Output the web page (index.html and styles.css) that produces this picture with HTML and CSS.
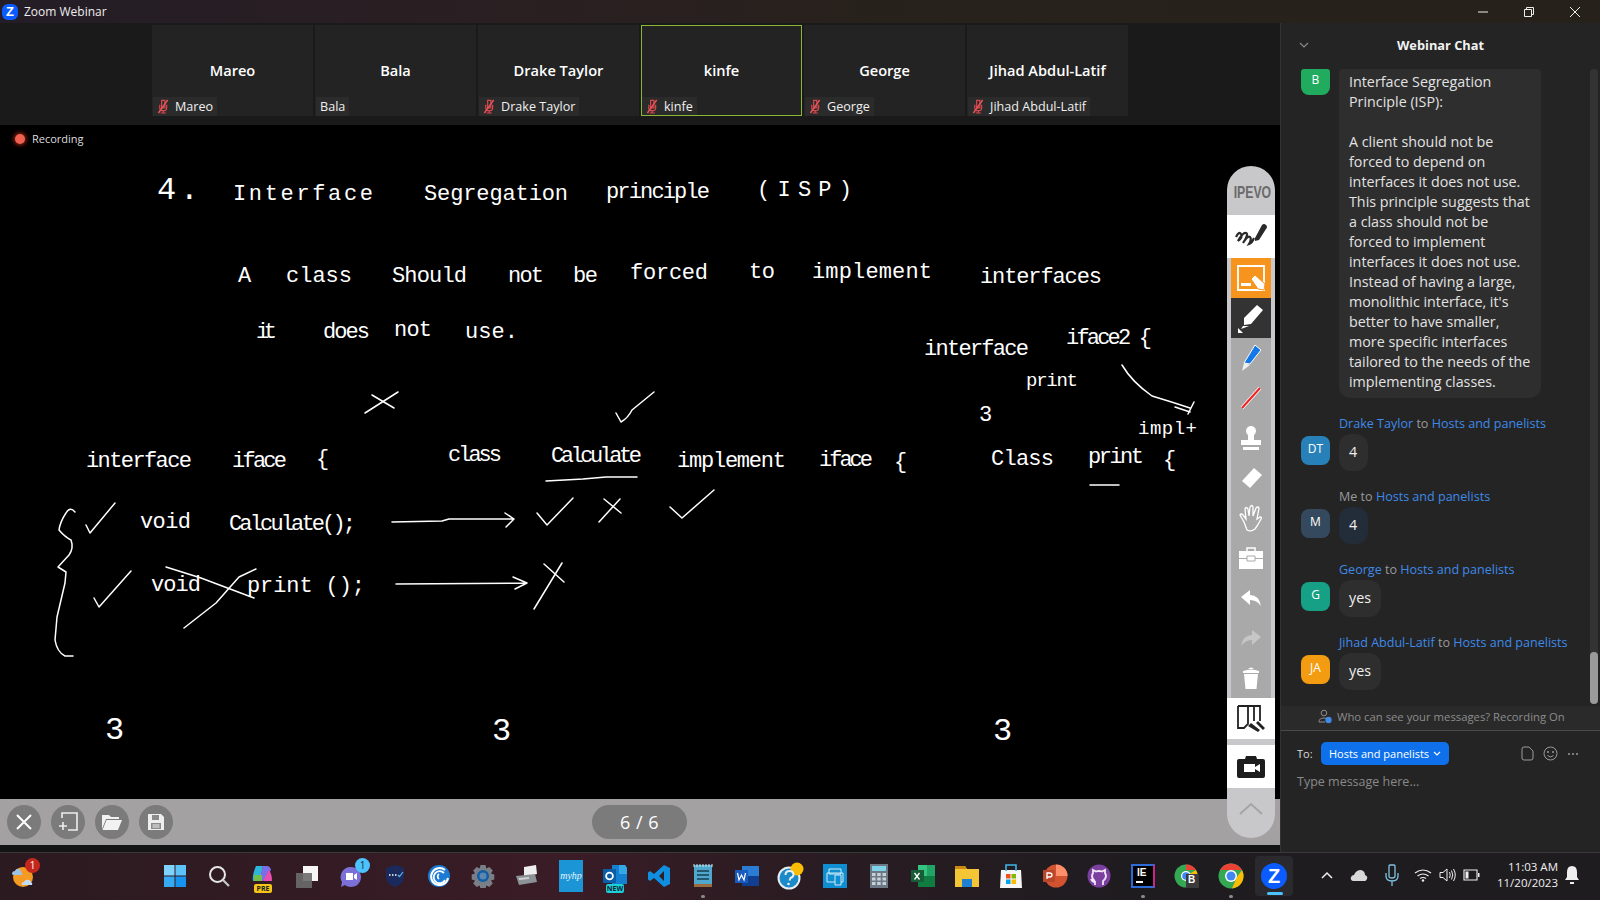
FILE: index.html
```html
<!DOCTYPE html>
<html lang="en">
<head>
    <meta charset="UTF-8">
    <title>Zoom Webinar</title>
    <link rel="stylesheet" href="styles.css">
</head>
<body>
    <svg class="sprite" width="0" height="0">
        <symbol id="mic-off" viewBox="0 0 14 16">
            <path d="M5 1.5h3.5v8h-3.5z M3 6v3.5c0 2 1.5 3 3.700 3s3.700-1 3.700-3V6 M6.700 12.500v2.500 M4 15h5.500" fill="none" stroke="#d9484c" stroke-width="1.300"/>
            <path d="M1.500 15L11.500 1" stroke="#e8555a" stroke-width="1.500"/>
        </symbol>
    </svg>

    <div class="titlebar">
        <div class="zoom-logo small">Z</div>
        <div class="title-text">Zoom Webinar</div>
        <div class="win-btns">
            <svg width="12" height="12" viewBox="0 0 12 12"><path d="M1 6h10" stroke="#eee" fill="none"/></svg>
            <svg width="12" height="12" viewBox="0 0 12 12"><path d="M1.500 3.500h7v7h-7z M3.500 3.500v-2h7v7h-2" stroke="#eee" fill="none"/></svg>
            <svg width="12" height="12" viewBox="0 0 12 12"><path d="M1 1l10 10M11 1L1 11" stroke="#eee" fill="none"/></svg>
        </div>
    </div>

    <div class="main">
        <div class="stage">
            <div class="strip">
                <div class="tile">
                    <div class="tile-name">Mareo</div>
                    <div class="tile-label"><svg class="mic"><use href="#mic-off"/></svg>Mareo</div>
                </div>
                <div class="tile">
                    <div class="tile-name">Bala</div>
                    <div class="tile-label">Bala</div>
                </div>
                <div class="tile">
                    <div class="tile-name">Drake Taylor</div>
                    <div class="tile-label"><svg class="mic"><use href="#mic-off"/></svg>Drake Taylor</div>
                </div>
                <div class="tile tile-active">
                    <div class="tile-name">kinfe</div>
                    <div class="tile-label"><svg class="mic"><use href="#mic-off"/></svg>kinfe</div>
                </div>
                <div class="tile">
                    <div class="tile-name">George</div>
                    <div class="tile-label"><svg class="mic"><use href="#mic-off"/></svg>George</div>
                </div>
                <div class="tile">
                    <div class="tile-name">Jihad Abdul-Latif</div>
                    <div class="tile-label"><svg class="mic"><use href="#mic-off"/></svg>Jihad Abdul-Latif</div>
                </div>
            </div>

            <div class="board">
                <div class="recording"><span class="rec-dot"></span>Recording</div>
                <svg class="ink-layer" viewBox="0 125 1280 674" width="1280" height="674">
                    <g class="ink">
                        <text class="ink-big" x="157" y="199" textLength="42">4 .</text>
                        <text x="233" y="200" textLength="140">Interface</text>
                        <text x="424" y="200" textLength="144">Segregation</text>
                        <text x="606" y="198" textLength="104">principle</text>
                        <text x="757" y="196" textLength="95">(ISP)</text>

                        <text x="238" y="282" textLength="16">A</text>
                        <text x="286" y="282" textLength="66">class</text>
                        <text x="392" y="282" textLength="75">Should</text>
                        <text x="508" y="282" textLength="36">not</text>
                        <text x="573" y="282" textLength="25">be</text>
                        <text x="630" y="279" textLength="78">forced</text>
                        <text x="749" y="278" textLength="26">to</text>
                        <text x="812" y="278" textLength="120">implement</text>
                        <text x="980" y="283" textLength="122">interfaces</text>

                        <text x="256" y="338" textLength="21">it</text>
                        <text x="323" y="338" textLength="47">does</text>
                        <text x="394" y="336" textLength="38">not</text>
                        <text x="465" y="338" textLength="53">use.</text>

                        <text x="924" y="355" textLength="105">interface</text>
                        <text x="1066" y="344" textLength="86">iface2 {</text>
                        <text class="ink-small" x="1026" y="386" textLength="52">print</text>
                        <text x="979" y="421" textLength="11">3</text>
                        <text class="ink-small" x="1138" y="434" textLength="59">impl+</text>

                        <text x="86" y="467" textLength="106">interface</text>
                        <text x="232" y="467" textLength="55">iface</text>
                        <text x="316" y="465" textLength="11">{</text>
                        <text x="448" y="461" textLength="54">class</text>
                        <text x="551" y="462" textLength="91">Calculate</text>
                        <text x="677" y="467" textLength="109">implement</text>
                        <text x="819" y="466" textLength="54">iface</text>
                        <text x="894" y="468" textLength="11">{</text>
                        <text x="991" y="465" textLength="63">Class</text>
                        <text x="1088" y="463" textLength="56">print</text>
                        <text x="1163" y="466" textLength="10">{</text>

                        <text x="140" y="528" textLength="51">void</text>
                        <text x="229" y="530" textLength="127">Calculate();</text>
                        <text x="151" y="591" textLength="50">void</text>
                        <text x="247" y="592" textLength="118">print ();</text>

                        <text class="ink-big" x="105" y="739" textLength="12">3</text>
                        <text class="ink-big" x="492" y="740" textLength="17">3</text>
                        <text class="ink-big" x="993" y="740" textLength="17">3</text>
                    </g>
                    <g class="marks">
                        <!-- curved arrow to impl -->
                        <path d="M1122 365Q1132 382 1152 396Q1172 402 1190 408M1175 407L1190 412M1194 402L1188 414"/>
                        <!-- crosses and ticks over the code -->
                        <path d="M365 413L398 392M372 395L394 408"/>
                        <path d="M616 413L621 422Q628 418 632 410L654 392"/>
                        <path d="M546 481L583 479L606 477L637 477"/>
                        <path d="M1090 485H1119"/>
                        <path d="M75 512Q70 506 66 513Q60 522 59 530Q65 537 71 540Q74 548 69 555L58 567L66 572L65 583L57 617L55 640Q57 652 65 656H73"/>
                        <path d="M86 525L90 533L115 503"/>
                        <path d="M94 598L99 607L131 571"/>
                        <path d="M537 513L547 525L573 498"/>
                        <path d="M604 499L621 513M620 499L599 522"/>
                        <path d="M670 507L682 518L714 490"/>
                        <path d="M166 567L201 578L254 598"/>
                        <path d="M184 628L216 603L239 577L256 569"/>
                        <path d="M544 564L564 582M562 563L534 609"/>
                        <path d="M392 522L442 521L449 519L514 519M505 513L514 519L506 527"/>
                        <path d="M396 584L527 583M513 577L527 583L515 589"/>
                    </g>
                </svg>
            </div>

            <div class="board-bar">
                <div class="round-btn">
                    <svg width="20" height="20" viewBox="0 0 20 20"><path d="M3 3l14 14M17 3L3 17" stroke="#fff" stroke-width="2" fill="none"/></svg>
                </div>
                <div class="round-btn">
                    <svg width="22" height="22" viewBox="0 0 22 22"><path d="M5 7V2h15v17h-9" stroke="#eee" stroke-width="1.600" fill="none"/><path d="M6 11v8M2 15h8" stroke="#eee" stroke-width="1.600"/></svg>
                </div>
                <div class="round-btn">
                    <svg width="22" height="20" viewBox="0 0 22 20"><path d="M1 3h7l2 2h8v2H5L1 17z" fill="#f2f2f2"/><path d="M5.500 8H21l-4 10H1.500z" fill="#f2f2f2"/></svg>
                </div>
                <div class="round-btn">
                    <svg width="20" height="20" viewBox="0 0 20 20"><path d="M2 2h13l3 3v13H2z" fill="#eee"/><path d="M6 3h7v5H6z" fill="#8b8b8b"/><path d="M5 11h10v6H5z" fill="#8b8b8b"/><path d="M6.500 13h7M6.500 15h7" stroke="#eee"/></svg>
                </div>
                <div class="page-pill">6 / 6</div>
            </div>
            <div class="board-gap"></div>

            <div class="ipevo">
                <div class="ipevo-head">IPEVO</div>
                <div class="tool tool-white">
                    <svg width="34" height="28" viewBox="0 0 34 28"><path d="M2 14q3-6 5-3t-3 7q5-9 8-8t-3 10q5-8 7-6t-1 7q3-1 5-6" fill="none" stroke="#2a2a2a" stroke-width="2.200"/><path d="M21 15L28 2q2-2 4 0t0 4l-7 11-4 1z" fill="#2a2a2a"/></svg>
                </div>
                <div class="tool-inset">
                    <div class="tool tool-orange">
                        <svg width="32" height="30" viewBox="0 0 32 30"><path d="M3 3h26v24H3z" fill="none" stroke="#fff" stroke-width="1.800"/><path d="M6 20h10v3H6z" fill="#fff"/><path d="M16 16l4-4 10 9-1 6-6-1z" fill="#fff" stroke="#f7941e"/></svg>
                    </div>
                    <div class="tool tool-dark">
                        <svg width="28" height="30" viewBox="0 0 28 30"><path d="M20 2l6 5-12 14-7 1 0-7z" fill="#fff"/><path d="M6 23l6 0-8 3z" fill="#fff"/><path d="M1 30V25l5 5z" fill="#fff"/></svg>
                    </div>
                    <div class="tool">
                        <svg width="22" height="28" viewBox="0 0 22 28"><path d="M15 1l6 5-11 14-6-1z" fill="#1478e8" stroke="#fff"/><path d="M4 19l6 2-8 6z" fill="#f0f0f0"/></svg>
                    </div>
                    <div class="tool">
                        <svg width="22" height="24" viewBox="0 0 22 24"><path d="M2 22L20 2" stroke="#fff" stroke-width="3.500"/><path d="M2 22L20 2" stroke="#ef2020" stroke-width="2"/></svg>
                    </div>
                    <div class="tool">
                        <svg width="22" height="28" viewBox="0 0 22 28"><circle cx="11" cy="7" r="5" fill="#fff"/><path d="M8 11h6v6H8z" fill="#fff"/><path d="M1 16h20v5H1zM3 23h16v3H3z" fill="#fff"/></svg>
                    </div>
                    <div class="tool">
                        <svg width="24" height="24" viewBox="0 0 24 24"><path d="M15 2l8 7-12 13-8-7z" fill="#fff"/></svg>
                    </div>
                    <div class="tool">
                        <svg width="26" height="28" viewBox="0 0 26 28"><path d="M6 18L2 11q1-2 3 0l3 4-1-10q1-3 3 0l1 7 1-9q2-3 3 0l0 9 3-8q2-2 3 0l-2 11 3-2q2 0 1 2-3 6-6 10-4 3-8 1z" fill="none" stroke="#fff" stroke-width="1.300"/></svg>
                    </div>
                    <div class="tool">
                        <svg width="26" height="24" viewBox="0 0 26 24"><path d="M9 5V2h8v3" fill="none" stroke="#fff" stroke-width="1.500"/><path d="M1 5h24v18H1z" fill="#fff"/><path d="M9 10h8v5H9z M1 12.500h8M17 12.500h8" fill="none" stroke="#aaa"/></svg>
                    </div>
                    <div class="tool">
                        <svg width="22" height="18" viewBox="0 0 22 18"><path d="M1 8L10 1v5q9 0 11 11-4-6-11-6v5z" fill="#fff"/></svg>
                    </div>
                    <div class="tool">
                        <svg width="22" height="18" viewBox="0 0 22 18"><path d="M21 8L12 1v5Q3 6 1 17q4-6 11-6v5z" fill="#c6c6c6"/></svg>
                    </div>
                    <div class="tool">
                        <svg width="18" height="24" viewBox="0 0 18 24"><path d="M1 5q8-3 16 0v2H1z M6 3q3-3 6 0" fill="#fff"/><path d="M2 8h14l-1.500 15h-11z" fill="#fff"/></svg>
                    </div>
                </div>
                <div class="tool tool-white tool-book">
                    <svg width="30" height="28" viewBox="0 0 30 28"><path d="M2 1v22h6l4-4V1h12v15M12 1h-10M18 1v15" fill="none" stroke="#222" stroke-width="1.800"/><path d="M12 21l3-3 9 7-2 2zM20 18l2-2 7 7-2 2z" fill="#222"/></svg>
                </div>
                <div class="tool tool-white tool-camera">
                    <svg width="28" height="24" viewBox="0 0 28 24"><path d="M9 1h10l1 3h6q2 0 2 2v15q0 2-2 2H2q-2 0-2-2V6q0-2 2-2h6z" fill="#1d1d1d"/><path d="M7 9h11v8H7zM18 12l5-3v8l-5-3z" fill="#fff"/></svg>
                </div>
                <div class="ipevo-foot">
                    <svg width="26" height="14" viewBox="0 0 26 14"><path d="M2 12L13 2l11 10" fill="none" stroke="#a5a5a5" stroke-width="2"/></svg>
                </div>
            </div>
        </div>

        <div class="chat">
            <div class="chat-head">
                <svg class="chat-collapse" width="10" height="6" viewBox="0 0 10 6"><path d="M1 1l4 4 4-4" fill="none" stroke="#8a8a8a" stroke-width="1.200"/></svg>
                Webinar Chat
            </div>
            <div class="chat-scroll">
                <div class="chat-list">
                    <div class="msg">
                        <div class="avatar avatar-cut av-green">B</div>
                        <div class="bubble bubble-long">Interface Segregation<br>Principle (ISP):<br><br>A client should not be<br>forced to depend on<br>interfaces it does not use.<br>This principle suggests that<br>a class should not be<br>forced to implement<br>interfaces it does not use.<br>Instead of having a large,<br>monolithic interface, it's<br>better to have smaller,<br>more specific interfaces<br>tailored to the needs of the<br>implementing classes.</div>
                    </div>
                    <div class="sender"><span class="who">Drake Taylor</span> to <span class="who">Hosts and panelists</span></div>
                    <div class="msg">
                        <div class="avatar av-blue">DT</div>
                        <div class="bubble">4</div>
                    </div>
                    <div class="sender">Me to <span class="who">Hosts and panelists</span></div>
                    <div class="msg">
                        <div class="avatar av-slate">M</div>
                        <div class="bubble bubble-me">4</div>
                    </div>
                    <div class="sender"><span class="who">George</span> to <span class="who">Hosts and panelists</span></div>
                    <div class="msg">
                        <div class="avatar av-teal">G</div>
                        <div class="bubble">yes</div>
                    </div>
                    <div class="sender"><span class="who">Jihad Abdul-Latif</span> to <span class="who">Hosts and panelists</span></div>
                    <div class="msg">
                        <div class="avatar av-orange">JA</div>
                        <div class="bubble">yes</div>
                    </div>
                </div>
                <div class="scrollbar"><div class="scroll-thumb"></div></div>
            </div>
            <div class="chat-notice">
                <svg width="15" height="15" viewBox="0 0 15 15"><circle cx="6" cy="4" r="2.800" fill="none" stroke="#8c8c8c"/><path d="M1 13q0-4 5-4 1 0 2 .5M1 13h6" fill="none" stroke="#8c8c8c"/><circle cx="10.500" cy="11" r="3.200" fill="#3f8ae8"/></svg>
                Who can see your messages? Recording On
            </div>
            <div class="compose">
                <div class="compose-row">
                    <span class="to-label">To:</span>
                    <span class="to-pill">Hosts and panelists
                        <svg width="8" height="5" viewBox="0 0 8 5"><path d="M1 1l3 3 3-3" fill="none" stroke="#fff" stroke-width="1.200"/></svg>
                    </span>
                    <div class="compose-icons">
                        <svg width="13" height="15" viewBox="0 0 13 15"><path d="M1 3q0-2 2-2h5l4 4v7q0 2-2 2H3q-2 0-2-2z" fill="none" stroke="#9a9a9a"/></svg>
                        <svg width="15" height="15" viewBox="0 0 15 15"><circle cx="7.500" cy="7.500" r="6.500" fill="none" stroke="#9a9a9a"/><circle cx="5" cy="6" r="1" fill="#9a9a9a"/><circle cx="10" cy="6" r="1" fill="#9a9a9a"/><path d="M4.500 9.500q3 3 6 0" fill="none" stroke="#9a9a9a"/></svg>
                        <svg width="12" height="4" viewBox="0 0 12 4"><circle cx="2" cy="2" r="1" fill="#9a9a9a"/><circle cx="6" cy="2" r="1" fill="#9a9a9a"/><circle cx="10" cy="2" r="1" fill="#9a9a9a"/></svg>
                    </div>
                </div>
                <div class="placeholder">Type message here...</div>
            </div>
        </div>
    </div>

    <div class="taskbar">
        <div class="tb-weather">
            <svg width="26" height="26" viewBox="0 0 26 26"><circle cx="13" cy="15" r="10" fill="#f59a23"/><path d="M2 12q0-3 3-3 1-3 4-2 2 1 2 3 2 1 1 3H3z" fill="#9bc3e8"/><path d="M12 23q-1-3 2-3 1-3 5-2 2 1 2 2 2 1 1 3z" fill="#c4dcf2"/></svg>
            <span class="tb-badge badge-red">1</span>
        </div>
        <div class="tb-apps">
            <div class="tb-app">
                <svg width="24" height="24" viewBox="0 0 24 24"><path d="M1 1h10.500v10.500H1z" fill="#7fd2fb"/><path d="M12.500 1H23v10.500H12.500z" fill="#5cc2f8"/><path d="M1 12.500h10.500V23H1z" fill="#36a9f3"/><path d="M12.500 12.500H23V23H12.500z" fill="#1693ee"/></svg>
            </div>
            <div class="tb-app">
                <svg width="24" height="24" viewBox="0 0 24 24"><circle cx="10.500" cy="10.500" r="7.500" fill="none" stroke="#e6e6e6" stroke-width="2"/><path d="M16 16l6 6" stroke="#c8c8c8" stroke-width="2.200"/></svg>
            </div>
            <div class="tb-app">
                <svg width="24" height="24" viewBox="0 0 24 24"><path d="M5 2h7l-3 15H2q-1-6 3-15z" fill="#2fb5d9"/><path d="M12 2h4q3 0 4 4l-8 11H8z" fill="#7e6de8"/><path d="M18 6q3 4 3 11h-9z" fill="#e94fb0"/><path d="M3 11h8v6H3z" fill="#6fbf4a"/></svg>
                <span class="pre-tag">PRE</span>
            </div>
            <div class="tb-app">
                <svg width="24" height="24" viewBox="0 0 24 24"><path d="M8 2h15v15H8z" fill="#f6f6f6"/><path d="M1 9h16v15H1z" fill="#6c6c6c" opacity=".9"/></svg>
            </div>
            <div class="tb-app">
                <svg width="24" height="24" viewBox="0 0 24 24"><path d="M12 3a10 10 0 1 1-6 18l-4 2 1-5A10 10 0 0 1 12 3z" fill="#7b6fd8"/><path d="M7 9h7v7H7zM15 11l3-2v7l-3-2z" fill="#fff"/></svg>
                <span class="tb-badge badge-blue">1</span>
            </div>
            <div class="tb-app">
                <svg width="22" height="24" viewBox="0 0 22 24"><path d="M11 1l9 3v9q0 7-9 10-9-3-9-10V4z" fill="#1b2a5c"/><path d="M5 11h1.500M8 11h1.500M11 11h1.500" stroke="#fff" stroke-width="1.500"/><path d="M14 11l1.500 1.500L19 8" fill="none" stroke="#5fb4f0" stroke-width="1.200"/></svg>
            </div>
            <div class="tb-app">
                <svg width="24" height="24" viewBox="0 0 24 24"><circle cx="12" cy="12" r="11" fill="#1a7ad4"/><path d="M18 6a8.500 8.500 0 1 0 3 8" fill="none" stroke="#fff" stroke-width="2"/><path d="M17 9a6 6 0 1 0 1 7" fill="none" stroke="#fff" stroke-width="1.800"/><path d="M12 10a3 3 0 0 0 0 5" fill="none" stroke="#fff" stroke-width="1.800"/></svg>
            </div>
            <div class="tb-app">
                <svg width="24" height="24" viewBox="0 0 24 24"><path d="M9.500 1h5l.8 3.500 3-1.500 3.500 3.500-1.800 3 3.300 1v5l-3.300 1 1.800 3-3.500 3.500-3-1.500-.8 3.500h-5l-.8-3.500-3 1.500-3.500-3.500 1.800-3-3.300-1v-5l3.300-1-1.800-3L5.700 3l3 1.500z" fill="#7a7f87"/><circle cx="12" cy="12" r="6" fill="#0f5ea8"/><circle cx="12" cy="12" r="3.500" fill="#5d87b0"/></svg>
            </div>
            <div class="tb-app">
                <svg width="24" height="24" viewBox="0 0 24 24"><path d="M9 3l12-2 1 9-13 3z" fill="#eee"/><path d="M1 12l19-2 2 8-18 3z" fill="#8d9296"/><path d="M4 14l10-1v2l-10 1z" fill="#d0d0d0"/></svg>
            </div>
            <div class="tb-app">
                <div class="myhp">myhp</div>
            </div>
            <div class="tb-app">
                <svg width="26" height="26" viewBox="0 0 26 26"><path d="M10 2h13l2 3v16H10z" fill="#1381cf"/><path d="M17 2h6l2 3v6h-8z" fill="#35a8e8"/><path d="M1 6h13v14H1z" fill="#0a5ea8"/><circle cx="7.500" cy="13" r="3.400" fill="none" stroke="#fff" stroke-width="1.800"/></svg>
                <span class="new-tag">NEW</span>
            </div>
            <div class="tb-app">
                <svg width="24" height="24" viewBox="0 0 24 24"><path d="M17 1l6 3v16l-6 3L7 14l-4 3-2-1.500V8.500L3 7l4 3zM17 7l-5 5 5 5z" fill="#0e8fe0"/></svg>
            </div>
            <div class="tb-app tb-open">
                <svg width="22" height="26" viewBox="0 0 22 26"><path d="M2 2h18v22H2z" fill="#4fa8cc"/><path d="M2 1v3M5 1v3M8 1v3M11 1v3M14 1v3M17 1v3M20 1v3" stroke="#cfe8f2"/><path d="M5 8h12M5 12h12M5 16h12" stroke="#163e52" stroke-width="1.500"/><path d="M2 21h18v3H2z" fill="#9c6b3e"/></svg>
            </div>
            <div class="tb-app">
                <svg width="26" height="26" viewBox="0 0 26 26"><path d="M8 3h17v20H8z" fill="#2b7cd3"/><path d="M8 13h17v10H8z" fill="#103f91"/><path d="M1 7h13v13H1z" fill="#185abd"/><path d="M3.500 10l1.500 7 2.500-5 2.500 5 1.500-7" fill="none" stroke="#fff" stroke-width="1.200"/></svg>
            </div>
            <div class="tb-app">
                <svg width="28" height="28" viewBox="0 0 28 28"><circle cx="12" cy="16" r="10.500" fill="#1a8ac8" stroke="#e8eef2" stroke-width="2"/><circle cx="20" cy="7" r="6.500" fill="#fbbc05"/><path d="M8.500 13q0-4 4-4t4 3.500q0 2.500-3 3.500l-1 2.500" fill="none" stroke="#e8eef2" stroke-width="2"/><circle cx="11.500" cy="22" r="1.300" fill="#e8eef2"/></svg>
            </div>
            <div class="tb-app">
                <svg width="24" height="24" viewBox="0 0 24 24"><path d="M0 0h24v24H0z" fill="#0f8fd2"/><path d="M6 5h12v5H6z" fill="none" stroke="#cfeaf7"/><path d="M4 9h16v9H4z" fill="none" stroke="#cfeaf7"/><path d="M12 11h6v10h-6z" fill="#0f8fd2" stroke="#cfeaf7"/></svg>
            </div>
            <div class="tb-app">
                <svg width="20" height="26" viewBox="0 0 20 26"><path d="M1 1h18v24H1z" fill="#6b7885"/><path d="M3 3h14v5H3z" fill="#7ed3e8"/><path d="M3 10h3.500v3H3zM8.200 10h3.500v3H8.200zM13.500 10H17v3h-3.500zM3 14.500h3.500v3H3zM8.200 14.500h3.500v3H8.200zM13.500 14.500H17v3h-3.500zM3 19h3.500v3H3zM8.200 19h3.500v3H8.200zM13.500 19H17v3h-3.500z" fill="#c9d0d6"/></svg>
            </div>
            <div class="tb-app">
                <svg width="26" height="26" viewBox="0 0 26 26"><path d="M8 2h17v22H8z" fill="#21a366"/><path d="M8 2h9v11H8z" fill="#33c481"/><path d="M8 13h17v11H8z" fill="#107c41"/><path d="M1 7h13v12H1z" fill="#185c37"/><path d="M4.500 10l5 6.500M9.500 10l-5 6.500" stroke="#fff" stroke-width="1.300"/></svg>
            </div>
            <div class="tb-app">
                <svg width="26" height="26" viewBox="0 0 26 26"><path d="M1 3h10l2 3h12v18H1z" fill="#f4c534"/><path d="M1 3h10l2 3H1z" fill="#c98a12"/><path d="M8 16h10v8H8z" fill="#1f7fd0"/></svg>
            </div>
            <div class="tb-app">
                <svg width="24" height="26" viewBox="0 0 24 26"><path d="M2 7h20l1 18H1z" fill="#f6f6f6"/><path d="M7 8V2h10v6" fill="none" stroke="#3fb4e8" stroke-width="1.600"/><path d="M7 11h4.500v4.500H7z" fill="#f25022"/><path d="M12.500 11H17v4.500h-4.500z" fill="#7fba00"/><path d="M7 16.500h4.500V21H7z" fill="#00a4ef"/><path d="M12.500 16.500H17V21h-4.500z" fill="#ffb900"/></svg>
            </div>
            <div class="tb-app">
                <svg width="26" height="26" viewBox="0 0 26 26"><circle cx="14" cy="13" r="11.500" fill="#d35230"/><path d="M14 1.500A11.500 11.500 0 0 1 25.500 13H14z" fill="#ff8f6b"/><path d="M1 7h12v12H1z" fill="#b7472a"/><path d="M5 16V10h2.500q2.500 0 2.500 2t-2.500 2H5" fill="none" stroke="#fff" stroke-width="1.300"/></svg>
            </div>
            <div class="tb-app">
                <svg width="24" height="24" viewBox="0 0 24 24"><circle cx="12" cy="12" r="11.500" fill="#7b3fa0"/><path d="M8 21v-3q-3 0-4-3M16 21v-4q1-1 2-2 2-3 0-6V6l-3 1.500q-3-1-6 0L6 6v3q-2 3 0 6 1 1.500 2 2" fill="none" stroke="#f0e6f5" stroke-width="1.800"/></svg>
            </div>
            <div class="tb-app tb-open">
                <div class="ij-logo">IE<span class="ij-bar"></span></div>
            </div>
            <div class="tb-app">
                <svg width="26" height="26" viewBox="0 0 26 26"><circle cx="12" cy="13" r="11.500" fill="#34a853"/><path d="M12 1.500A11.500 11.500 0 0 1 22 7H12z" fill="#ea4335"/><path d="M22 7a11.500 11.500 0 0 1-4 16l-6-10z" fill="#fbbc05"/><circle cx="12" cy="13" r="5" fill="#fff"/><circle cx="12" cy="13" r="3.800" fill="#4285f4"/><path d="M12 11h13v14H12z" fill="#3a3a3a"/></svg>
                <span class="profile-b">B</span>
            </div>
            <div class="tb-app tb-open">
                <svg width="26" height="26" viewBox="0 0 26 26"><circle cx="13" cy="13" r="12.500" fill="#34a853"/><path d="M13 .5A12.500 12.500 0 0 1 24 7H13L6.500 2.500z" fill="#ea4335"/><path d="M2 7a12.500 12.500 0 0 1 11-6.500V7z" fill="#ea4335"/><path d="M24 7a12.500 12.500 0 0 1-10 18.500L19 14z" fill="#fbbc05"/><circle cx="13" cy="13" r="6" fill="#fff"/><circle cx="13" cy="13" r="4.500" fill="#4285f4"/></svg>
            </div>
            <div class="tb-app tb-zoom">
                <div class="zoom-logo">Z</div>
            </div>
        </div>
        <div class="tray">
            <svg class="tray-up" width="12" height="8" viewBox="0 0 12 8"><path d="M1 7l5-5 5 5" fill="none" stroke="#eee" stroke-width="1.500"/></svg>
            <svg class="tray-cloud" width="18" height="14" viewBox="0 0 18 14"><path d="M3 13q-3-1-2-4 1-2 3-2 2-5 7-5 4 1 4 5 3 1 2 4-1 2-2 2z" fill="#d8d8d8"/></svg>
            <svg class="tray-mic" width="14" height="24" viewBox="0 0 14 24"><path d="M5 2h4q1 0 1 1v10q0 2-3 2t-3-2V3q0-1 1-1z" fill="none" stroke="#7fc4e0" stroke-width="1.300"/><path d="M1 10v3q0 5 6 5t6-5v-3M7 18v5" fill="none" stroke="#7fc4e0" stroke-width="1.300"/></svg>
            <svg class="tray-wifi" width="18" height="14" viewBox="0 0 18 14"><path d="M1 5q8-6 16 0M3.500 8q5.500-4 11 0M6 10.500q3-2 6 0" fill="none" stroke="#eee" stroke-width="1.200"/><circle cx="9" cy="12.500" r="1.200" fill="#eee"/></svg>
            <svg class="tray-sound" width="17" height="16" viewBox="0 0 17 16"><path d="M1 5.500h3L8 2v12L4 10.500H1z" fill="none" stroke="#eee"/><path d="M10.500 5q1.500 3 0 6M12.500 3.500q2.500 4.500 0 9M14.500 2q3.500 6 0 12" fill="none" stroke="#eee"/></svg>
            <svg class="tray-batt" width="17" height="12" viewBox="0 0 17 12"><path d="M1 1h13v10H1z" fill="none" stroke="#eee" stroke-width="1.100"/><path d="M2.500 2.500h3v7h-3z" fill="#eee"/><path d="M15 4h1.500v4H15z" fill="#eee"/></svg>
            <div class="clock">
                <div>11:03 AM</div>
                <div>11/20/2023</div>
            </div>
            <svg class="tray-bell" width="16" height="20" viewBox="0 0 16 20"><path d="M8 1q5 0 5 6v5l2 3H1l2-3V7q0-6 5-6z" fill="#eee"/><path d="M6 17h4v2H6z" fill="#eee"/></svg>
        </div>
    </div>
</body>
</html>
```

FILE: styles.css
```css
* {
    margin: 0;
    padding: 0;
    box-sizing: border-box;
}

html, body {
    width: 1600px;
    height: 900px;
    overflow: hidden;
}

body {
    font-family: "Open Sans", "Liberation Sans", sans-serif;
    background: #1a1a1a;
    color: #e8e8e8;
    display: flex;
    flex-direction: column;
}

.sprite {
    position: absolute;
}

/* title bar */
.titlebar {
    height: 23px;
    flex: none;
    display: flex;
    align-items: center;
    padding-left: 2px;
    background: linear-gradient(90deg, #241d26, #2a1f22 30%, #27221b 60%, #26211b);
}

.title-text {
    font-size: 12px;
    margin-left: 6px;
    color: #eee;
}

.zoom-logo {
    width: 26px;
    height: 26px;
    border-radius: 50%;
    background: #0b5cff;
    color: #fff;
    font-family: "Liberation Sans", sans-serif;
    font-weight: bold;
    font-size: 20px;
    line-height: 26px;
    text-align: center;
}

.zoom-logo.small {
    width: 16px;
    height: 16px;
    border-radius: 6px;
    font-size: 13px;
    line-height: 16px;
}

.win-btns {
    margin-left: auto;
    display: flex;
    gap: 34px;
    padding-right: 19px;
}

/* main area */
.main {
    position: relative;
    flex: none;
    height: 829px;
    display: flex;
}

.stage {
    width: 1280px;
    flex: none;
    display: flex;
    flex-direction: column;
}

.strip {
    height: 102px;
    flex: none;
    background: #1a1a1a;
    display: flex;
    gap: 2px;
    padding: 2px 0 9px 152px;
}

.tile {
    position: relative;
    width: 161px;
    background: #232323;
    display: flex;
    align-items: center;
    justify-content: center;
    padding-bottom: 1px;
}

.tile-active::after {
    content: "";
    position: absolute;
    inset: 0;
    border: 1px solid #8ab734;
}

.tile-name {
    font-size: 14.6px;
    font-weight: 600;
    color: #fff;
}

.tile-label {
    position: absolute;
    left: 1px;
    bottom: 0;
    height: 19px;
    padding: 0 4px;
    background: #2b2b2b;
    display: flex;
    align-items: center;
    gap: 5px;
    font-size: 12.6px;
    color: #f0f0f0;
}

.mic {
    width: 13px;
    height: 15px;
}

.board {
    position: relative;
    flex: 1;
    background: #000;
}

.recording {
    position: absolute;
    left: 15px;
    top: 6px;
    display: flex;
    align-items: center;
    gap: 7px;
    font-size: 11px;
    color: #ddd;
}

.rec-dot {
    width: 10px;
    height: 10px;
    border-radius: 50%;
    background: #f0604f;
    box-shadow: 0 0 4px 1px #a8281c;
}

.ink-layer {
    display: block;
}

.ink text {
    font-family: "Liberation Mono", monospace;
    font-size: 22px;
    fill: #fff;
}

.ink text.ink-big {
    font-size: 32px;
}

.ink text.ink-small {
    font-size: 19px;
}

.marks path {
    fill: none;
    stroke: #fff;
    stroke-width: 1.500;
    stroke-linecap: round;
    stroke-linejoin: round;
}

.board-bar {
    height: 46px;
    flex: none;
    background: #a3a1a2;
    display: flex;
    align-items: center;
    gap: 10px;
    padding-left: 7px;
}

.round-btn {
    width: 34px;
    height: 34px;
    border-radius: 50%;
    background: #7b7b7b;
    display: flex;
    align-items: center;
    justify-content: center;
}

.page-pill {
    width: 95px;
    height: 34px;
    border-radius: 17px;
    background: #7b7b7b;
    color: #fff;
    font-size: 18px;
    letter-spacing: .5px;
    line-height: 34px;
    text-align: center;
    margin-left: 409px;
}

.board-gap {
    height: 7px;
    flex: none;
    background: #141414;
}

/* ipevo toolbar */
.ipevo {
    position: absolute;
    left: 1227px;
    top: 143px;
    width: 48px;
    height: 672px;
    border-radius: 24px;
    background: #c8c7c9;
    display: flex;
    flex-direction: column;
    overflow: hidden;
}

.ipevo-head {
    height: 49px;
    flex: none;
    padding-top: 17px;
    text-align: center;
    font-family: "Liberation Sans", sans-serif;
    font-weight: bold;
    font-size: 17px;
    transform: scaleX(.72);
    color: #6a6a6a;
}

.tool {
    height: 40px;
    flex: none;
    display: flex;
    align-items: center;
    justify-content: center;
}

.tool-white {
    background: #fff;
    height: 43px;
}

.tool-inset {
    margin-left: 4px;
    margin-right: 4px;
    background: #a9a9a9;
    flex: none;
}

.tool-orange {
    background: #f7941e;
}

.tool-dark {
    background: #333;
}

.tool-book {
    height: 41px;
}

.tool-camera {
    margin-top: 6px;
}

.ipevo-foot {
    flex: 1;
    display: flex;
    align-items: center;
    justify-content: center;
    padding-bottom: 8px;
}

/* chat panel */
.chat {
    width: 320px;
    flex: none;
    background: #242424;
    border-left: 1px solid #333;
    display: flex;
    flex-direction: column;
}

.chat-head {
    position: relative;
    height: 46px;
    flex: none;
    display: flex;
    align-items: center;
    justify-content: center;
    padding-bottom: 2px;
    font-size: 12.8px;
    font-weight: 700;
    color: #f2f2f2;
}

.chat-collapse {
    position: absolute;
    left: 18px;
    top: 19px;
}

.chat-scroll {
    height: 637px;
    flex: none;
    display: flex;
    overflow: hidden;
}

.chat-list {
    flex: 1;
    padding-left: 20px;
}

.msg {
    display: flex;
    gap: 9px;
    align-items: flex-start;
    margin-bottom: 17px;
}

.avatar {
    width: 29px;
    height: 29px;
    flex: none;
    margin-top: 2px;
    border-radius: 8px;
    color: #fff;
    font-size: 12px;
    line-height: 26px;
    text-align: center;
}

.avatar-cut {
    height: 26px;
    margin-top: 0;
    line-height: 22px;
    border-radius: 3px 3px 8px 8px;
}

.av-green { background: #21ab5f; }
.av-blue { background: #2781b8; }
.av-slate { background: #34495e; }
.av-teal { background: #16a085; }
.av-orange { background: #f39c12; }

.bubble {
    min-width: 29px;
    height: 37px;
    padding: 0 10px;
    border-radius: 12px;
    background: #2e2e2e;
    color: #f0f0f0;
    font-size: 14.3px;
    line-height: 36px;
    white-space: nowrap;
}

.bubble-long {
    width: 202px;
    height: 329px;
    padding-top: 3px;
    border-radius: 4px 4px 12px 12px;
    line-height: 20px;
    color: #e2e2e2;
}

.bubble-me {
    background: #232c39;
}

.sender {
    height: 18px;
    margin: 0 0 1px 38px;
    font-size: 12.55px;
    line-height: 18px;
    color: #9a9a9a;
    white-space: nowrap;
}

.who {
    color: #3f8ae8;
}

.scrollbar {
    width: 8px;
    height: 635px;
    flex: none;
    margin-right: 2px;
    border-radius: 4px;
    background: #333;
    display: flex;
    flex-direction: column;
    justify-content: flex-end;
}

.scroll-thumb {
    height: 52px;
    border-radius: 4px;
    background: #9a9a9a;
}

.chat-notice {
    height: 25px;
    flex: none;
    display: flex;
    align-items: center;
    gap: 4px;
    padding: 0 0 3px 37px;
    background: #2a2a2a;
    border-bottom: 1px solid #4a4a4a;
    font-size: 11.3px;
    color: #8c8c8c;
}

.compose {
    flex: 1;
    padding: 11px 16px 0;
}

.compose-row {
    display: flex;
    align-items: center;
}

.to-label {
    font-size: 11px;
    color: #ddd;
    width: 24px;
}

.to-pill {
    height: 23px;
    width: 128px;
    border-radius: 5px;
    background: #0e71eb;
    display: flex;
    align-items: center;
    justify-content: center;
    gap: 4px;
    font-size: 11px;
    color: #fff;
}

.compose-icons {
    margin-left: auto;
    display: flex;
    align-items: center;
    gap: 9px;
    padding-right: 5px;
}

.placeholder {
    margin-top: 8px;
    font-size: 12.5px;
    color: #8a8a8a;
}

/* taskbar */
.taskbar {
    height: 48px;
    flex: none;
    display: flex;
    align-items: center;
    border-top: 1px solid #3c383a;
    background: linear-gradient(90deg, #2b1a20, #3a1c26 35%, #2a1c22 50%, #1f1c20 70%);
}

.tb-weather {
    position: relative;
    width: 26px;
    height: 26px;
    margin: 0 0 4px 10px;
}

.tb-badge {
    position: absolute;
    border-radius: 50%;
    color: #fff;
    font-size: 10px;
    text-align: center;
}

.badge-red {
    right: -4px;
    top: -4px;
    width: 15px;
    height: 15px;
    line-height: 15px;
    background: #c4281c;
}

.badge-blue {
    right: 3px;
    top: 2px;
    width: 15px;
    height: 15px;
    line-height: 15px;
    background: #4cc2ff;
    color: #1a2a3a;
}

.tb-apps {
    display: flex;
    margin: 0 0 2px 117px;
}

.tb-app {
    position: relative;
    width: 44px;
    height: 40px;
    display: flex;
    align-items: center;
    justify-content: center;
}

.tb-open::after {
    content: "";
    position: absolute;
    left: 20px;
    bottom: -2px;
    width: 4px;
    height: 3px;
    border-radius: 2px;
    background: #8a8a8a;
}

.tb-zoom {
    background: #2a2a2e;
    border-radius: 4px;
    margin-left: 2px;
    width: 38px;
}

.tb-zoom::after {
    content: "";
    position: absolute;
    left: 12px;
    bottom: 1px;
    width: 16px;
    height: 3px;
    border-radius: 2px;
    background: #4cc2ff;
}

.pre-tag,
.new-tag {
    position: absolute;
    left: 13px;
    bottom: 3px;
    width: 18px;
    font-size: 7px;
    font-weight: 700;
    line-height: 9px;
    text-align: center;
    border-radius: 2px;
}

.pre-tag {
    background: #f5c518;
    color: #222;
}

.new-tag {
    background: #1bd0d8;
    color: #123;
}

.myhp {
    width: 24px;
    height: 32px;
    background: #1b95d6;
    color: #e8f6fd;
    font-family: "Liberation Serif", serif;
    font-style: italic;
    font-size: 10px;
    line-height: 32px;
    text-align: center;
}

.ij-logo {
    position: relative;
    width: 24px;
    height: 24px;
    padding-left: 4px;
    background: #000;
    border: 2px solid #2d6cd8;
    border-right-color: #c9238e;
    color: #fff;
    font-family: "Liberation Sans", sans-serif;
    font-size: 10px;
    font-weight: 700;
    line-height: 13px;
}

.ij-bar {
    position: absolute;
    left: 3px;
    bottom: 3px;
    width: 7px;
    height: 2px;
    background: #fff;
}

.profile-b {
    position: absolute;
    left: 23px;
    top: 18px;
    font-size: 10px;
    font-family: "Liberation Sans", sans-serif;
    font-weight: 700;
    color: #fff;
}

.tray {
    margin: 0 0 4px auto;
    display: flex;
    align-items: center;
    padding-right: 20px;
}

.tray-cloud { margin-left: 17px; }
.tray-mic { margin-left: 17px; }
.tray-wifi { margin-left: 15px; }
.tray-sound { margin-left: 7px; }
.tray-batt { margin-left: 7px; }

.clock {
    width: 78px;
    text-align: right;
    font-size: 11.5px;
    line-height: 16px;
    color: #f0f0f0;
}

.tray-bell {
    margin-left: 6px;
}
```
